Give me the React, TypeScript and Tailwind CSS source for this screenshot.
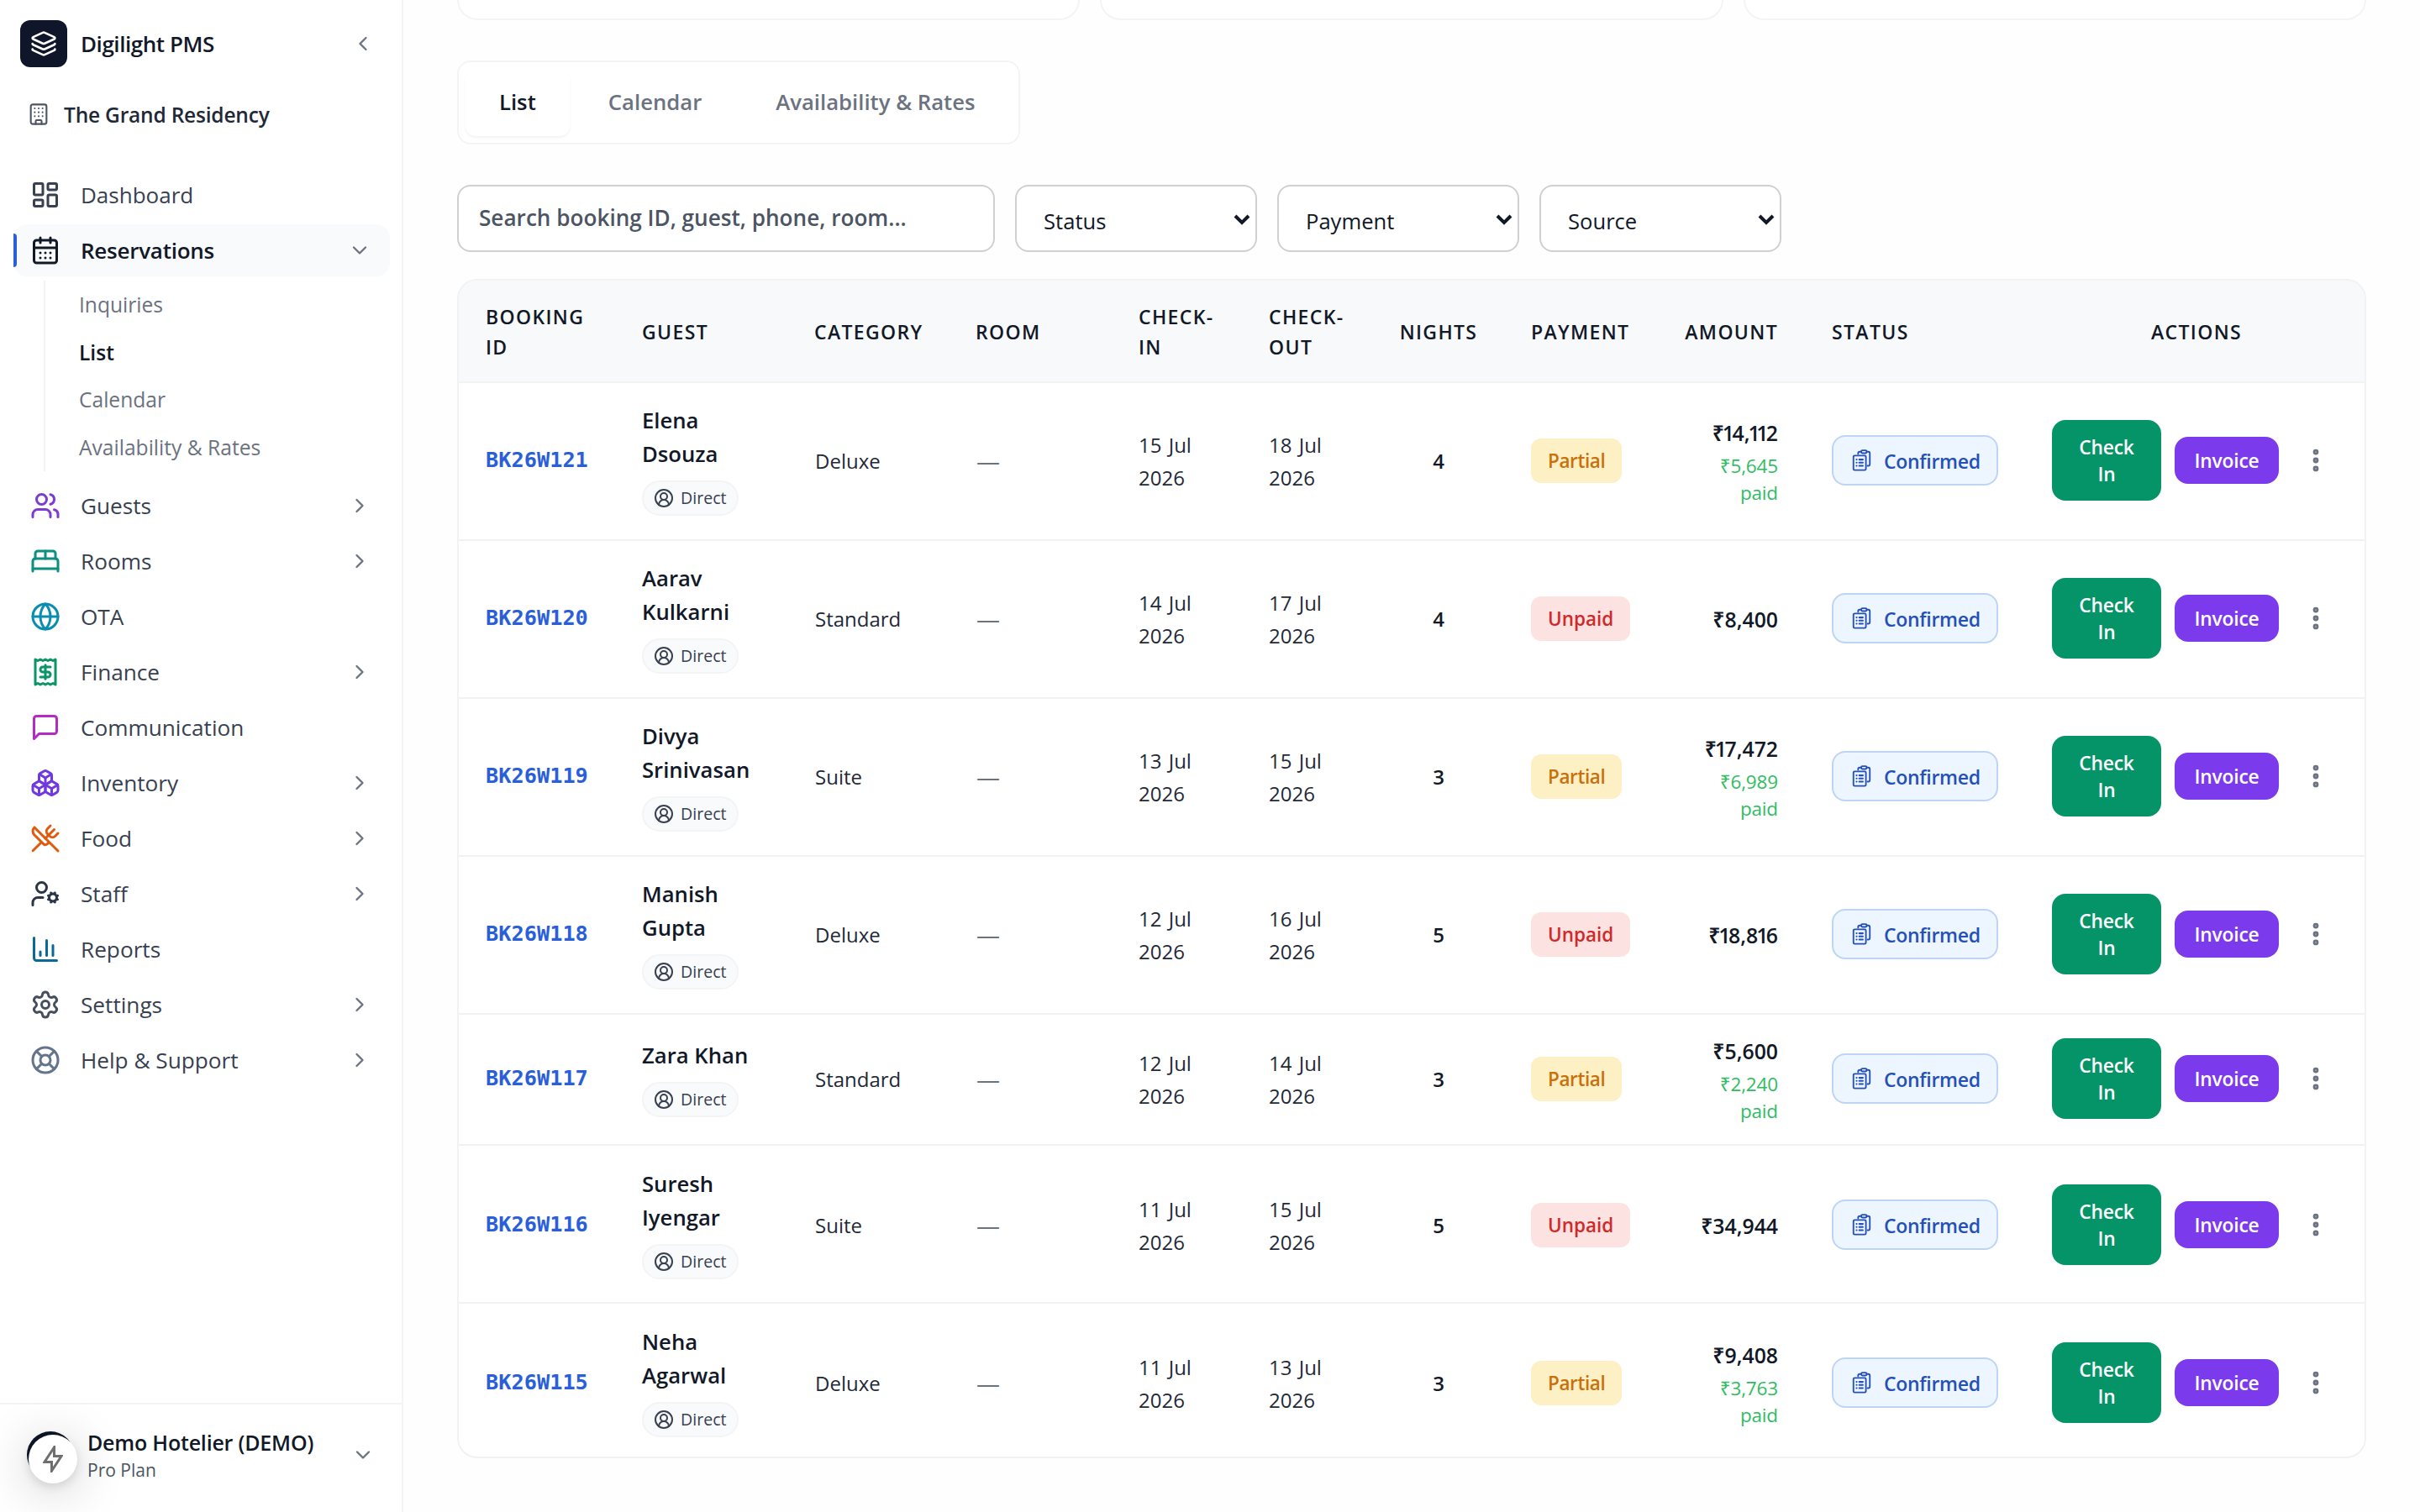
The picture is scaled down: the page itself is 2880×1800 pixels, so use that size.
import type { ReactNode } from "react"
import {
  BedDouble,
  Boxes,
  Building,
  CalendarDays,
  ChartColumn,
  ChevronDown,
  ChevronLeft,
  ChevronRight,
  CircleUserRound,
  EllipsisVertical,
  Globe,
  Layers,
  LayoutDashboard,
  LifeBuoy,
  Settings,
  UserCog,
  Users,
  UtensilsCrossed,
} from "lucide-react"

type NavEntry = {
  label: string
  icon: ReactNode
  expandable?: boolean
}

type Booking = {
  id: string
  guest: string[]
  category: string
  checkIn: string
  checkOut: string
  nights: number
  amount: string
  paid?: string
}

const nav: NavEntry[] = [
  { label: "Guests", icon: <Users className="size-9 text-[#7e3bd0]" />, expandable: true },
  { label: "Rooms", icon: <BedDouble className="size-9 text-[#0d8f80]" />, expandable: true },
  { label: "OTA", icon: <Globe className="size-9 text-[#0a8db0]" /> },
  { label: "Finance", icon: <ReceiptIcon />, expandable: true },
  { label: "Communication", icon: <MessageIcon /> },
  { label: "Inventory", icon: <Boxes className="size-9 text-[#7038e0]" />, expandable: true },
  { label: "Food", icon: <UtensilsCrossed className="size-9 text-[#e0590c]" />, expandable: true },
  { label: "Staff", icon: <UserCog className="size-9 text-[#2b3648]" />, expandable: true },
  { label: "Reports", icon: <ChartColumn className="size-9 text-[#0a6a96]" /> },
  { label: "Settings", icon: <Settings className="size-9 text-[#454f5e]" />, expandable: true },
  { label: "Help & Support", icon: <LifeBuoy className="size-9 text-[#64748b]" />, expandable: true },
]

const subNav = ["Inquiries", "List", "Calendar", "Availability & Rates"]

const bookings: Booking[] = [
  { id: "BK26W121", guest: ["Elena", "Dsouza"], category: "Deluxe", checkIn: "15 Jul", checkOut: "18 Jul", nights: 4, amount: "₹14,112", paid: "₹5,645" },
  { id: "BK26W120", guest: ["Aarav", "Kulkarni"], category: "Standard", checkIn: "14 Jul", checkOut: "17 Jul", nights: 4, amount: "₹8,400" },
  { id: "BK26W119", guest: ["Divya", "Srinivasan"], category: "Suite", checkIn: "13 Jul", checkOut: "15 Jul", nights: 3, amount: "₹17,472", paid: "₹6,989" },
  { id: "BK26W118", guest: ["Manish", "Gupta"], category: "Deluxe", checkIn: "12 Jul", checkOut: "16 Jul", nights: 5, amount: "₹18,816" },
  { id: "BK26W117", guest: ["Zara Khan"], category: "Standard", checkIn: "12 Jul", checkOut: "14 Jul", nights: 3, amount: "₹5,600", paid: "₹2,240" },
  { id: "BK26W116", guest: ["Suresh", "Iyengar"], category: "Suite", checkIn: "11 Jul", checkOut: "15 Jul", nights: 5, amount: "₹34,944" },
  { id: "BK26W115", guest: ["Neha", "Agarwal"], category: "Deluxe", checkIn: "11 Jul", checkOut: "13 Jul", nights: 3, amount: "₹9,408", paid: "₹3,763" },
]

const columns = "grid grid-cols-[186px_205px_192px_194px_155px_156px_156px_182px_176px_262px_404px] items-center"

function ReceiptIcon() {
  return (
    <svg viewBox="0 0 24 24" fill="none" stroke="currentColor" strokeWidth="2" strokeLinecap="round" strokeLinejoin="round" className="size-9 text-[#0b9566]">
      <path d="M4 2v20l2-1 2 1 2-1 2 1 2-1 2 1 2-1 2 1V2l-2 1-2-1-2 1-2-1-2 1-2-1-2 1Z" />
      <path d="M16 8h-6a2 2 0 1 0 0 4h4a2 2 0 1 1 0 4H8" />
      <path d="M12 17.5v-11" />
    </svg>
  )
}

function MessageIcon() {
  return (
    <svg viewBox="0 0 24 24" fill="none" stroke="currentColor" strokeWidth="2" strokeLinecap="round" strokeLinejoin="round" className="size-9 text-[#b32bc4]">
      <path d="M21 15a2 2 0 0 1-2 2H7l-4 4V5a2 2 0 0 1 2-2h14a2 2 0 0 1 2 2z" />
    </svg>
  )
}

function ClipboardIcon() {
  return (
    <svg viewBox="0 0 24 28" fill="none" stroke="currentColor" strokeWidth="2" strokeLinecap="round" strokeLinejoin="round" className="h-[26px] w-[23px]">
      <path d="M7.500 6V5a2 2 0 0 1 2-2h2M18.500 3H20.500a2 2 0 0 1 2 2V19a2 2 0 0 1-2 2H19.500" />
      <rect x="11.500" y="1.200" width="7" height="3.600" rx="1.500" />
      <rect x="1.500" y="8" width="16" height="18.500" rx="1.500" />
      <path d="M5.500 13h.1M9 13h4.500M5.500 17h.1M9 17h4.500M5.500 21h.1M9 21h4.500" strokeWidth="2.300" />
    </svg>
  )
}

function Sidebar() {
  return (
    <aside className="flex h-full w-[480px] shrink-0 flex-col border-r-2 border-[#f3f4f6] bg-white">
      <div className="flex h-[104px] items-center pl-6 pr-8">
        <div className="flex size-14 items-center justify-center rounded-xl bg-[#0f1629] text-white">
          <Layers className="size-8" />
        </div>
        <span className="ml-4 pt-px text-[26px] font-semibold tracking-[-0.450px] text-[#111827]">Digilight PMS</span>
        <ChevronLeft className="ml-auto size-7 text-[#6b7280]" />
      </div>
      <div className="flex h-16 items-center pl-8">
        <Building className="size-7 text-[#4b5563]" strokeWidth={1.8} />
        <span className="ml-4 pt-0.5 text-[24.500px] font-semibold tracking-[-0.200px] text-[#1f2937]">The Grand Residency</span>
      </div>

      <nav className="mt-[33px] flex flex-col gap-1 px-4">
        <div className="flex h-[62px] items-center pl-5 text-[#374151]">
          <LayoutDashboard className="size-9" />
          <span className="ml-6 text-[26px]">Dashboard</span>
        </div>
        <div className="relative -mr-0.5 flex h-[62px] items-center rounded-2xl bg-[#f9fafb] pl-5 pr-[22px] text-[#111827]">
          <span className="absolute left-0 top-[11px] h-10 w-1 rounded-r bg-[#2b5fd9]" />
          <CalendarDays className="size-9" />
          <span className="ml-6 text-[26px] font-semibold tracking-[-0.250px]">Reservations</span>
          <ChevronDown className="ml-auto size-7 text-[#6b7280]" />
        </div>
        <div className="ml-9 mt-px flex h-[227px] flex-col border-l-2 border-[#f1f2f4] pl-10">
          {subNav.map((item) => (
            <span
              key={item}
              className={`flex h-[56.750px] items-center pt-0.5 text-[24.600px] ${item === "List" ? "font-semibold text-[#111827]" : "text-[#6b7280]"}`}
            >
              {item}
            </span>
          ))}
        </div>
        <div className="mt-[6px] flex flex-col gap-1">
          {nav.map((item) => (
            <div key={item.label} className="flex h-[62px] items-center pl-5 pr-5">
              {item.icon}
              <span className="ml-6 pt-px text-[26.200px] text-[#374151]">{item.label}</span>
              {item.expandable && <ChevronRight className="ml-auto size-7 text-[#6b7280]" />}
            </div>
          ))}
        </div>
      </nav>

      <div className="mt-auto flex h-[130px] items-center border-t-2 border-[#f3f4f6] px-8 pb-2">
        <div className="relative size-14 rounded-full bg-[#0f1629]">
          <span className="absolute left-[2px] top-1 flex size-[58px] items-center justify-center rounded-full bg-white shadow-[0_8px_60px_rgba(0,0,0,0.22),0_4px_12px_rgba(0,0,0,0.12)]">
            <svg viewBox="0 0 24 32" fill="none" stroke="#6f6f6f" strokeWidth="3" className="h-8 w-6">
              <path d="M13.500 2v10.500H22L10.500 30V19.500H2L13.500 2Z" />
            </svg>
          </span>
        </div>
        <div className="ml-4 flex flex-col">
          <span className="text-[25px] font-semibold leading-9 tracking-[-0.200px] text-[#111827]">Demo Hotelier (DEMO)</span>
          <span className="text-[21px] leading-[30px] text-[#4b5563]">Pro Plan</span>
        </div>
        <ChevronDown className="ml-auto size-7 text-[#6b7280]" />
      </div>
    </aside>
  )
}

function Filter({ label }: { label: string }) {
  return (
    <div className="flex h-20 w-[288px] items-center justify-between rounded-2xl border-2 border-[#cfd0d2] bg-white pl-8 pr-1.5 text-[#111827]">
      <span className="pt-[9px] text-[25.600px]">{label}</span>
      <svg viewBox="0 0 20 14" fill="none" stroke="currentColor" strokeWidth="4" className="mt-1 h-3.5 w-5">
        <path d="M2 2l8 8 8-8" />
      </svg>
    </div>
  )
}

// the "1" sits tighter than the other digits in amounts
function Amount({ value }: { value: string }) {
  return (
    <>
      {value.split("").map((char, i) =>
        char === "1" ? (
          <span key={i} className="-ml-[2px] tracking-[-2.500px]">
            1
          </span>
        ) : (
          char
        )
      )}
    </>
  )
}

function BookingRow({ booking, index }: { booking: Booking; index: number }) {
  const height = booking.guest.length > 1 ? "h-[188px]" : "h-[156px]"
  const lower = index > 4
  return (
    <div className={`${columns} ${height} ${lower ? "pt-0.5" : "pb-0.5"} border-b-2 border-[#f1f2f4] text-[24px] text-[#1f2937]`}>
      <span className="pl-8 font-['DejaVu_Sans_Mono',monospace] text-[25.300px] font-bold text-[#2b5fd9]">{booking.id}</span>
      <div className={`flex flex-col items-start pl-8 ${lower ? "pb-1" : "pb-0.5"}`}>
        {booking.guest.map((line) => (
          <span key={line} className="pt-px text-[25.700px] font-semibold leading-[39px] text-[#111827]">
            {line}
          </span>
        ))}
        <span className="mt-3 flex h-[42px] items-center gap-2 rounded-full border-2 border-[#f3f4f6] bg-[#f9fafb] px-3 text-[19.600px] font-medium text-[#374151]">
          <CircleUserRound className="size-6" />
          Direct
        </span>
      </div>
      <span className="pl-[33px] pt-0.5">{booking.category}</span>
      <span className="pl-[33px] text-[28px] text-[#6b7280]">—</span>
      <span className="pl-8 pt-0.5 leading-[39px] [word-spacing:2px]">
        {booking.checkIn}
        <br />
        2026
      </span>
      <span className="pl-8 pt-0.5 leading-[39px] [word-spacing:2px]">
        {booking.checkOut}
        <br />
        2026
      </span>
      <span className="pt-0.5 text-center font-semibold text-[#111827]">{booking.nights}</span>
      <div className="flex pl-8">
        <span
          className={`flex h-[53px] items-center rounded-xl px-5 pt-0.5 text-[22.500px] font-semibold ${
            booking.paid ? "bg-[#fdf0c4] tracking-[-0.400px] text-[#c9700c]" : "bg-[#fde2e2] text-[#cf2a2a]"
          }`}
        >
          {booking.paid ? "Partial" : "Unpaid"}
        </span>
      </div>
      <div className="pr-8 pt-0.5 text-right">
        <div className="text-[24.800px] font-semibold leading-10 text-[#111827]">
          <Amount value={booking.amount} />
        </div>
        {booking.paid && (
          <div className="mt-1 text-[22.500px] leading-8 tracking-[-0.150px] text-[#2fbd63]">
            {booking.paid}
            <br />
            paid
          </div>
        )}
      </div>
      <div className="flex pl-8">
        <span className="flex h-[60px] w-[198px] items-center rounded-2xl border-2 border-[#bdd5f5] bg-[#edf5fe] pl-[22px] text-[23px] font-semibold tracking-[-0.300px] text-[#2450b8]">
          <ClipboardIcon />
          <span className="ml-[15px] pt-0.5">Confirmed</span>
        </span>
      </div>
      <div className="flex items-center pl-8 text-center text-[22.800px] font-semibold leading-8 tracking-[-0.200px] text-white">
        <button className="h-24 w-[130px] rounded-2xl bg-[#059467] pt-0.5">
          Check
          <br />
          In
        </button>
        <button className="ml-4 h-14 w-[124px] rounded-2xl bg-[#7c3aed] pt-0.5">Invoice</button>
        <EllipsisVertical className="ml-[27px] size-[34px] text-[#6b7280]" strokeWidth={2.8} />
      </div>
    </div>
  )
}

export default function App() {
  return (
    <div className="flex h-[1800px] w-[2880px] overflow-hidden bg-[#fefefe] font-['Open_Sans','Noto_Sans',sans-serif]">
      <Sidebar />
      <main className="flex-1 px-16">
        <div className="grid h-6 grid-cols-3 gap-6">
          {[0, 1, 2].map((card) => (
            <div key={card} className="rounded-b-3xl border-2 border-t-0 border-[#f3f4f6] bg-white" />
          ))}
        </div>

        <div className="mt-12 flex h-[100px] w-[670px] gap-2 rounded-2xl border-2 border-[#f3f4f6] bg-white p-2 text-[25.700px] font-semibold">
          <span className="flex items-center rounded-xl px-10 pt-px text-[#111827] shadow-[0_2px_3px_rgba(0,0,0,0.05)]">List</span>
          <span className="-ml-0.5 flex items-center px-10 pt-px text-[#6b7280]">Calendar</span>
          <span className="flex items-center whitespace-nowrap px-10 pt-px text-[#6b7280]">Availability &amp; Rates</span>
        </div>

        <div className="mt-12 flex gap-6">
          <div className="flex h-20 w-[640px] items-center rounded-2xl border-2 border-[#cfd0d2] bg-white pl-6 text-[26.150px] font-semibold text-[#4b5563]">
            Search booking ID, guest, phone, room...
          </div>
          <Filter label="Status" />
          <Filter label="Payment" />
          <Filter label="Source" />
        </div>

        <section className="mt-8 h-[1404px] overflow-hidden rounded-3xl border-2 border-[#f1f2f4] bg-white">
          <div className={`${columns} h-[122px] border-b-2 border-[#f1f2f4] bg-[#f7f9fa] pt-0.5 text-[23px] font-semibold leading-9 tracking-[1.350px] text-[#111827]`}>
            <span className="pl-8">
              BOOKING
              <br />
              ID
            </span>
            <span className="pl-8">GUEST</span>
            <span className="pl-8">CATEGORY</span>
            <span className="pl-8">ROOM</span>
            <span className="pl-8">
              CHECK-
              <br />
              IN
            </span>
            <span className="pl-8">
              CHECK-
              <br />
              OUT
            </span>
            <span className="text-center">NIGHTS</span>
            <span className="pl-8">PAYMENT</span>
            <span className="pr-8 text-right">AMOUNT</span>
            <span className="pl-8">STATUS</span>
            <span className="pl-1 text-center">ACTIONS</span>
          </div>
          {bookings.map((booking, i) => (
            <BookingRow key={booking.id} booking={booking} index={i} />
          ))}
        </section>
      </main>
    </div>
  )
}
